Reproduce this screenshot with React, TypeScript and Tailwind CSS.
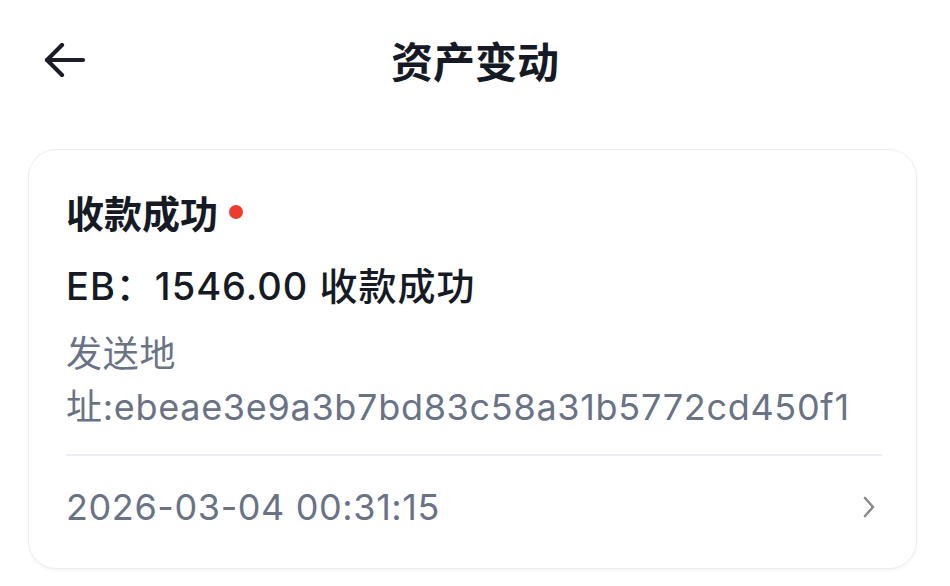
import React from "react";

export default function App() {
  const font = { fontFamily: 'Inter, "Noto Sans CJK SC", sans-serif' };
  const cjk = { fontFamily: '"Noto Sans CJK SC", sans-serif' };
  return (
    <div className="w-[950px] h-[586px] bg-white overflow-hidden" style={font}>
      <div className="grid grid-cols-[1fr_auto_1fr] items-center h-[120px] px-[44px]">
        <div className="flex items-center">
          <svg width="42" height="34" viewBox="0 0 42 34" fill="none" stroke="#1a1d27" strokeWidth="4.2" strokeLinecap="round" strokeLinejoin="round">
            <path d="M18 2 L3 17 L18 32" />
            <path d="M3 17 H39" />
          </svg>
        </div>
        <div className="text-[42px] font-bold text-[#161a24] leading-none" style={cjk}>资产变动</div>
        <div />
      </div>
      <div className="ml-[28px] mr-[33px] mt-[29px] rounded-[28px] border-[1.5px] border-[#eaeef0] bg-white shadow-[0_2px_3px_rgba(0,0,0,0.04)] pl-[37px] pr-[34px] pt-[37px] pb-[36px]">
        <div className="flex items-center h-[50px]">
          <span className="text-[38px] font-bold text-[#161a24] leading-none" style={cjk}>收款成功</span>
          <span className="ml-[11px] w-[14px] h-[14px] rounded-full bg-[#ef3b2f]" />
        </div>
        <div className="mt-[24px] h-[50px] flex items-center text-[38px] tracking-[1px] font-medium text-[#161a24] leading-none">
          EB：1546.00 收款成功
        </div>
        <div className="mt-[17px] text-[36px] tracking-[0.7px] leading-[53px] text-[#697385]">
          发送地
          <br />
          址:ebeae3e9a3b7bd83c58a31b5772cd450f1
        </div>
        <div className="mt-[20px] h-[2px] bg-[#eceef1]" />
        <div className="mt-[26px] h-[50px] flex items-center justify-between">
          <span className="text-[36px] tracking-[0.6px] text-[#697385] leading-none">2026-03-04 00:31:15</span>
          <svg width="14" height="22" viewBox="0 0 14 22" fill="none" stroke="#8c8c8c" strokeWidth="2.6" strokeLinecap="round" strokeLinejoin="round" className="mr-[6px]">
            <path d="M3 2 L11 11 L3 20" />
          </svg>
        </div>
      </div>
    </div>
  );
}
